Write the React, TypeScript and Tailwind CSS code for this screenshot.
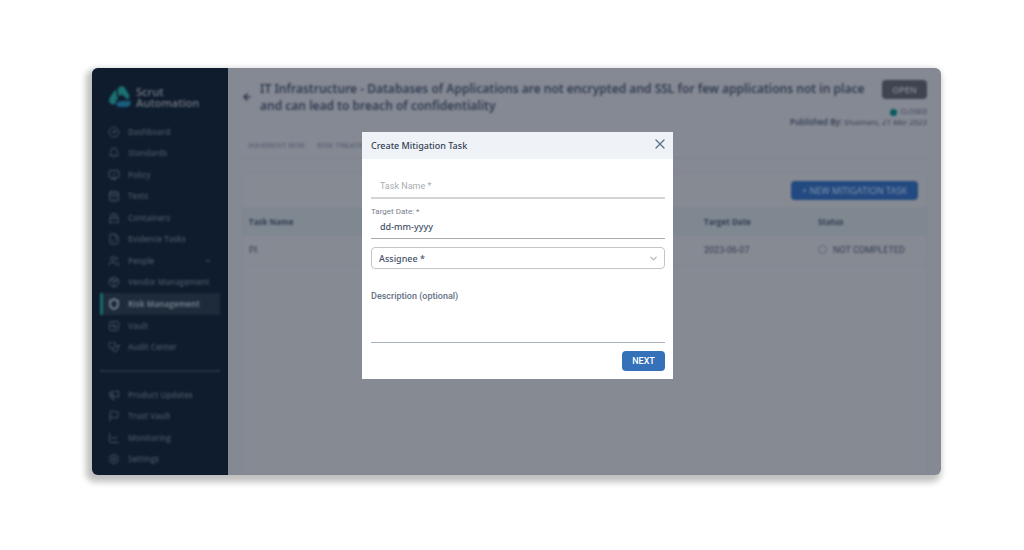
import { useState } from "react"
import {
  ArrowLeft,
  Bell,
  CalendarDays,
  ChevronDown,
  CircleGauge,
  FileCheck,
  Flag,
  LineChart,
  Megaphone,
  MonitorCheck,
  Package,
  Settings,
  Ship,
  Shield,
  Stethoscope,
  SquareActivity,
  Users,
  X,
} from "lucide-react"

const MAIN_LINKS = [
  { name: "Dashboard", icon: CircleGauge },
  { name: "Standards", icon: Bell },
  { name: "Policy", icon: MonitorCheck },
  { name: "Tests", icon: CalendarDays },
  { name: "Containers", icon: Ship },
  { name: "Evidence Tasks", icon: FileCheck },
  { name: "People", icon: Users, expandable: true },
  { name: "Vendor Management", icon: Package },
  { name: "Risk Management", icon: Shield, active: true },
  { name: "Vault", icon: SquareActivity },
  { name: "Audit Center", icon: Stethoscope },
]

const MORE_LINKS = [
  { name: "Product Updates", icon: Megaphone },
  { name: "Trust Vault", icon: Flag },
  { name: "Monitoring", icon: LineChart },
  { name: "Settings", icon: Settings },
]

const TASKS = [{ name: "PI", date: "2023-06-07", status: "NOT COMPLETED" }]

function Logo() {
  return (
    <svg viewBox="0 0 24 24" className="w-6 h-6" aria-hidden="true">
      <path d="M10.300 3C12 .8 15.500 .8 17 3L20.800 9.500C22 12 21 14.300 19 14.300C17.500 12.500 15.500 10.500 13.300 9.500L11 11.500C9.800 9 9.500 5.500 10.300 3Z" fill="#1b7072" />
      <path d="M8.500 4.500C8 8 8.800 11 10 13.200C8.500 15 7.700 16.800 7 19C4.500 20.500 1 18.500 1 15.500C1 14 1.700 12.800 2.500 11.500L6 6.500C6.800 5.500 7.500 4.800 8.500 4.500Z" fill="#1b7072" />
      <path d="M8.500 18C10.500 16 14 15.400 17 15.800C19.500 16.200 21.500 16.200 22.500 15.800C23.500 18.500 22 21.500 19 22H11C9 21.700 8 20 8.500 18Z" fill="#1b5c7c" />
    </svg>
  )
}

function SideLink({ link }: { link: any }) {
  const Icon = link.icon
  return (
    <a
      href="#"
      className={`flex-1 flex items-center border-l-3 pl-[5px] pr-2 ${
        link.active ? "bg-[#1d2b3b] border-[#166c6e] text-[#737b86] font-bold" : "border-transparent text-[#4a5563] font-semibold"
      }`}
    >
      <Icon className="w-3 h-3 mr-2" strokeWidth={link.active ? 4 : 2} />
      <span className="flex-1 whitespace-nowrap">{link.name}</span>
      {link.expandable && <ChevronDown className="w-2 h-2" strokeWidth={3} />}
    </a>
  )
}

export default function App() {
  const [open, setOpen] = useState(true)

  return (
    <div className="min-h-screen flex bg-white pl-[92px] pr-[83px] pt-[68px] pb-[75px] font-['Open_Sans','Noto_Sans',sans-serif]">
      <div className="relative flex-1 flex rounded-md overflow-hidden bg-[#858993] shadow-[-3px_4px_6px_3px_rgba(0,0,0,0.25)]">
        <aside className="w-[136px] shrink-0 bg-[#0f1c2e]">
          <div className="h-full flex flex-col px-2 pb-[5px] text-[8px] leading-3 blur-[1px]">
            <div className="h-[53px] flex items-center gap-1 pl-2 pt-1">
              <Logo />
              <div className="text-[11px] leading-[11px] font-semibold text-[#6f7681]">
                Scrut
                <br />
                Automation
              </div>
            </div>
            <nav className="flex-11 flex flex-col">
              {MAIN_LINKS.map(l => (
                <SideLink key={l.name} link={l} />
              ))}
            </nav>
            <hr className="mt-3 mb-3 border-t-2 border-[#263444]" />
            <nav className="flex-4 flex flex-col">
              {MORE_LINKS.map(l => (
                <SideLink key={l.name} link={l} />
              ))}
            </nav>
          </div>
        </aside>

        <main className="flex-1 min-w-0 flex flex-col pl-[14px] pr-[14px] pt-3 text-[#303c51] blur-[1px]">
          <header className="flex items-start">
            <button aria-label="Back" className="mt-3 mr-2">
              <ArrowLeft className="w-[10px] h-[10px]" strokeWidth={4} />
            </button>
            <h1 className="flex-1 font-['Noto_Sans',sans-serif] text-[12px] leading-[17px] font-semibold">
              IT Infrastructure - Databases of Applications are not encrypted and SSL for few applications not in place
              and can lead to breach of confidentiality
            </h1>
            <div className="w-[45px] flex flex-col items-end whitespace-nowrap text-[8px] leading-[10px]">
              <button className="w-full h-[19px] mb-2 rounded-sm bg-[#3e4450] text-[#868a93] text-[9px] font-semibold">OPEN</button>
              <div className="flex items-center gap-1 text-[7px]">
                <span className="w-[7px] h-[7px] rounded-full bg-[#075b60]" />
                CLOSED
              </div>
              <div>
                <span className="font-semibold">Published By:</span> <em>Shubham, 21 Mar 2023</em>
              </div>
            </div>
          </header>

          <div className="flex gap-3 mt-3 px-[6px] pb-[7px] border-b border-[#7d838e] text-[8px] leading-3 text-[#4c566a]">
            <a href="#">INHERENT RISK</a>
            <a href="#">RISK TREATMENT PLAN</a>
          </div>

          <section className="flex-1 mt-[14px] border border-[#80858f] bg-[#868a93]">
            <div className="flex justify-end px-2 py-[7px]">
              <button className="h-[19px] px-[11px] rounded-sm bg-[#234a80] text-[#8795ad] text-[9px] font-medium">
                + NEW MITIGATION TASK
              </button>
            </div>
            <table className="w-full text-left text-[8px] leading-3">
              <thead>
                <tr className="h-[29px] bg-[#7f8790]">
                  <th className="pl-[6px] font-bold">Task Name</th>
                  <th className="w-[114px] font-bold">Target Date</th>
                  <th className="w-[108px] font-bold">Status</th>
                </tr>
              </thead>
              <tbody className="font-[Roboto,sans-serif] text-[9px]">
                {TASKS.map(t => (
                  <tr key={t.name} className="h-7 border-b border-[#80858f]">
                    <td className="pl-[6px]">{t.name}</td>
                    <td>{t.date}</td>
                    <td>
                      <span className="flex items-center gap-[6px] whitespace-nowrap">
                        <span className="w-[9px] h-[9px] rounded-full border border-[#5f6776]" />
                        {t.status}
                      </span>
                    </td>
                  </tr>
                ))}
              </tbody>
            </table>
          </section>
        </main>

        {open && (
          <div className="absolute inset-0 flex items-start justify-center pt-16 pl-[2px]">
            <div role="dialog" aria-labelledby="dialog-title" className="w-[311px] bg-white text-[#344054] font-['Noto_Sans',sans-serif]">
              <div className="flex items-center justify-between h-[27px] pl-[9px] pr-[5px] bg-[#eff3f8]">
                <h2 id="dialog-title" className="text-[9px] leading-3 font-medium">Create Mitigation Task</h2>
                <button aria-label="Close" onClick={() => setOpen(false)} className="pb-1">
                  <X className="w-4 h-4 text-[#66758a]" strokeWidth={2} />
                </button>
              </div>

              <form className="pl-[9px] pr-2 pt-[14px] pb-2" onSubmit={e => e.preventDefault()}>
                <input
                  aria-label="Task Name"
                  placeholder="Task Name *"
                  className="block w-full h-[26px] pt-px px-[9px] border-b-2 border-[#d4d4d4] font-[Roboto,sans-serif] text-[9px] placeholder:text-[#a9adb3] outline-none"
                />

                <label htmlFor="target-date" className="block mt-[7px] font-[Roboto,sans-serif] text-[8px] leading-3 text-[#7b828e]">
                  Target Date: *
                </label>
                <input
                  id="target-date"
                  placeholder="dd-mm-yyyy"
                  className="block w-full h-[21px] px-[9px] pb-1 border-b border-[#a9aaac] text-[9px] font-medium placeholder:text-[#46536a] outline-none"
                />

                <div className="relative mt-2">
                  <select
                    aria-label="Assignee"
                    className="block w-full h-[22px] pt-px px-[7px] appearance-none rounded-sm border border-[#c3c5c8] bg-white text-[9px] font-medium text-[#46536a]"
                  >
                    <option>Assignee *</option>
                  </select>
                  <ChevronDown className="absolute right-[6px] top-[6px] w-[11px] h-[11px] text-[#b5b9be] pointer-events-none" strokeWidth={3} />
                </div>

                <label htmlFor="description" className="block mt-[21px] font-[Roboto,sans-serif] text-[9px] leading-3 font-medium text-[#667085]">
                  Description (optional)
                </label>
                <textarea id="description" className="block w-full h-[41px] border-b border-[#a9b0c0] resize-none outline-none" />

                <div className="flex justify-end mt-2">
                  <button className="h-5 w-[43px] pt-px rounded-sm bg-[#3571b9] text-white text-[9px] font-medium font-[Roboto,sans-serif]">
                    NEXT
                  </button>
                </div>
              </form>
            </div>
          </div>
        )}
      </div>
    </div>
  )
}
